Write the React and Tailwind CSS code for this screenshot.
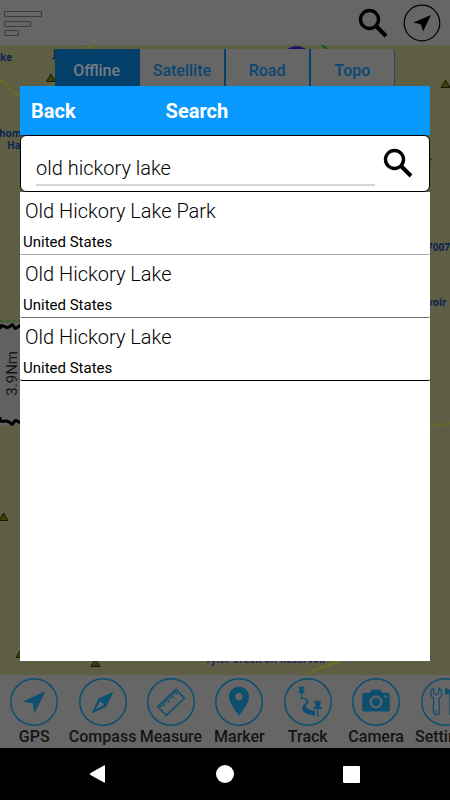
import React from "react";

const tabs = ["Offline", "Satellite", "Road", "Topo"];

const results = [
    { name: "Old Hickory Lake Park", country: "United States", line: "border-[#aaaaaa]" },
    { name: "Old Hickory Lake", country: "United States", line: "border-[#6e6e6e]" },
    { name: "Old Hickory Lake", country: "United States", line: "border-black" },
];

const SearchIcon = ({ className }) => (
    <svg viewBox="0 0 30 30" className={className} fill="none" stroke="currentColor" aria-hidden="true">
        <circle cx="11.5" cy="11.5" r="9" strokeWidth="3.4" />
        <path d="M18 18L28 28" strokeWidth="4" />
    </svg>
);

const icons = {
    GPS: <path d="M35.3 13.3L12.5 23.8L22.8 25.2L24.4 35.5Z" fill="currentColor" />,
    Compass: (
        <g>
            <path d="M34.5 13.8L19.5 20.5L12.7 35.4L27.5 28.5Z" fill="currentColor" />
            <path d="M21.2 23L25.2 26.8L16.2 31.8Z" fill="#666666" />
        </g>
    ),
    Measure: (
        <g fill="none" stroke="currentColor" strokeWidth="1.5">
            <path d="M29 11.3L37.4 20.3L19.3 37.4L10.8 28.6Z" />
            <path d="M12.7 26.7l2.2 2.2M14.8 24.7l3.2 3.2M16.9 22.7l2.2 2.2M19 20.7l3.2 3.2M21.1 18.7l2.2 2.2M23.2 16.7l3.2 3.2M25.3 14.7l2.2 2.2M27.2 12.9l3.2 3.2" />
        </g>
    ),
    Marker: (
        <path
            d="M24 8.7C18.3 8.7 14 13 14 18.6C14 25 20 32 24 37.8C28 32 34 25 34 18.6C34 13 29.7 8.7 24 8.7ZM24 15.1A3.6 3.6 0 1 1 24 22.3A3.6 3.6 0 1 1 24 15.1Z"
            fill="currentColor"
            fillRule="evenodd"
        />
    ),
    Track: (
        <g fill="currentColor">
            <path d="M14.6 8.7h5.8v1.4l-.8.8v2l1.6 2.3h-7.4l1.6-2.3v-2l-.8-.8zM17.1 15.2h1v5.8h-1z" />
            <path d="M30.4 22.8h6.4v1.6l-.9.8v2.4l2.4 3.4h-9.400l2.4-3.400v-2.400l-.9-.8zM33 30.9h1.3v8h-1.300z" />
            <path d="M18 19.800C20.500 19.800 24.600 21 24.200 23.800C23.700 26.300 21.500 27 22.200 29C23 31.500 27 32.200 31.200 32.800V37.400C24 37 18.200 34.600 18.200 30.200C18.200 27 22.600 25.800 22.400 23.600C22.200 22 20 21.400 18 21Z" />
        </g>
    ),
    Camera: (
        <g>
            <path
                d="M12.5 14.8h5.6l1.8-3.2h8.2l1.8 3.2h5.6a2.2 2.2 0 0 1 2.2 2.2v14.4a2.2 2.2 0 0 1-2.2 2.2h-23a2.2 2.2 0 0 1-2.2-2.2v-14.4a2.2 2.2 0 0 1 2.2-2.2z"
                fill="currentColor"
            />
            <circle cx="24" cy="24" r="5.4" fill="none" stroke="#666666" strokeWidth="2" />
            <path d="M32.5 17.5h2.5v2h-2.5z" fill="#666666" />
        </g>
    ),
    Settings: (
        <g>
            <path
                d="M12.8 10v5.2l2.4 1.8l2.4-1.8V10c4 2 4.2 8 .4 10.2L18.6 34.6c0 3-6.2 3-6.2 0L12.6 20.2C8.8 18 9 12 12.8 10Z"
                fill="none"
                stroke="currentColor"
                strokeWidth="1.2"
            />
            <circle cx="15.4" cy="34" r="1" fill="currentColor" />
            <path d="M24 10.5h2l1.5 1h8.5c2 0 3 2 3 4h-4v2h-7v-2l-2 1h-2z" fill="currentColor" />
            <path d="M29 17.5h4.5v19h-4.5z" fill="none" stroke="currentColor" strokeWidth="1.2" />
        </g>
    ),
};

const TopBar = () => (
    <header className="flex h-[45px] shrink-0 items-center bg-[#666666] pr-[9px] pl-1">
        <button aria-label="Menu" className="h-7 w-10">
            <svg viewBox="0 0 40 28" className="h-7 w-10" fill="none" stroke="#3b3e3b" strokeWidth="1.2">
                <rect x="0.5" y="2.5" width="37" height="5" rx="1" />
                <rect x="0.5" y="12.5" width="26" height="5" rx="1" />
                <rect x="0.5" y="21.5" width="14" height="5" rx="1" />
            </svg>
        </button>
        <button aria-label="Search" className="ml-auto mr-[15px]">
            <SearchIcon className="size-[30px]" />
        </button>
        <button aria-label="My location">
            <svg viewBox="0 0 38 38" className="size-[38px]">
                <circle cx="19" cy="19" r="17.8" fill="none" stroke="#000" strokeWidth="1.2" />
                <path d="M28 11L10.5 18.5L18 20.4L20 27.5Z" />
            </svg>
        </button>
    </header>
);

const ChartMap = () => (
    <main className="relative flex-1 overflow-hidden bg-[#5e5e45]">
        <svg className="absolute inset-0 h-full w-full" aria-hidden="true">
            <g fill="none" stroke="#62662f" strokeWidth="3">
                <path d="M0 36C8 38 10 46 17 50L24 50" />
                <path d="M50 42C64 30 76 8 94 0" />
                <path d="M305 631C315 622 335 620 350 611" />
                <path d="M428 382L450 378" />
            </g>
            <g fill="none" stroke="#707428" strokeWidth="1">
                <path d="M0 36C8 38 10 46 17 50L24 50" />
                <path d="M50 42C64 30 76 8 94 0" />
                <path d="M305 631C315 622 335 620 350 611" />
            </g>
            {/* Water and boat ramp */}
            <path d="M287 5C291 0 302 0 307 5Z" fill="#11116b" />
            <path d="M322 0L327 4" stroke="#075c1c" strokeWidth="2" />
            {/* Scale bar */}
            <path d="M0 278H20V380H0Z" fill="#626262" />
            <path d="M0 276H20" stroke="#155c2b" strokeDasharray="4 2" />
            <path d="M0 284V281C5 280 6 284 9 282S12 278 14 282S18 280 22 280" fill="none" stroke="#000" strokeWidth="3" />
            <path d="M0 372V376C5 377 6 375 9 377S12 381 14 377S18 378 22 378" fill="none" stroke="#000" strokeWidth="3" />
            {/* Beacons */}
            <g fill="#3f4008" stroke="#171800">
                <path d="M46.5 36.5L51 29L55.5 36.5Z" />
                <path d="M441 42.5L445.5 35L450 42.5Z" />
                <path d="M-1 475.5L3.5 468L8 475.5Z" />
                <path d="M16 612.5L20.5 605L25 612.5Z" />
                <path d="M91 621.5L95.5 614L100 621.5Z" />
                <path d="M423 115L427 108L431 115Z" />
            </g>
        </svg>
        <div className="font-['Open_Sans',sans-serif] text-[10px] leading-3 font-bold whitespace-nowrap text-[#0a2450]">
            <span className="absolute top-[6px] left-0">ke</span>
            <span className="absolute top-[2px] left-[53px]">J</span>
            <span className="absolute top-[82px] left-[-1px]">home</span>
            <span className="absolute top-[94px] left-[7px]">Ha</span>
            <span className="absolute top-[196px] left-[427px]">7007 I</span>
            <span className="absolute top-[251px] left-[427px]">voir</span>
            <span className="absolute top-[608px] left-[205px] text-[#1c2766]">Tyler Creek on Reservoir</span>
        </div>
        <span className="absolute top-[306px] left-[4px] font-['Roboto',sans-serif] text-[15px] leading-4 text-[#151515] [writing-mode:vertical-rl] rotate-180">
            3.9Nm
        </span>
        <nav className="relative mx-[55px] mt-1 flex h-12 divide-x-2 divide-[#063f69] overflow-hidden rounded-t-sm border-r border-[#24486a]">
            {tabs.map((tab) => (
                <button
                    key={tab}
                    className={
                        tab === "Offline"
                            ? "h-11 flex-1 bg-[#033f68] text-base font-medium text-[#737b82]"
                            : "h-11 flex-1 bg-[#666666] text-base font-medium text-[#0b4673]"
                    }
                >
                    {tab}
                </button>
            ))}
        </nav>
    </main>
);

const ToolBar = () => (
    <nav className="flex h-[73px] shrink-0 overflow-hidden bg-[#666666] pt-[3px]">
        {Object.keys(icons).map((label) => (
            <button key={label} className="flex w-[15.2%] shrink-0 flex-col items-center text-[#0c4f6f]">
                <svg viewBox="0 0 48 48" className="size-12" aria-hidden="true">
                    <circle cx="24" cy="24" r="23.2" fill="none" stroke="currentColor" strokeWidth="1.5" />
                    {icons[label]}
                </svg>
                <span className="mt-px text-base leading-5 font-medium text-[#151515]">{label}</span>
            </button>
        ))}
    </nav>
);

const SystemBar = () => (
    <footer className="flex h-[52px] shrink-0 items-center justify-center gap-[109px] bg-black pr-0.5 text-white">
        <button aria-label="Back">
            <svg viewBox="0 0 18 18" className="size-[18px]" fill="currentColor">
                <path d="M15 .5Q16 0 16 1V17Q16 18 15 17.5L1.500 10Q0 9 1.500 8Z" />
            </svg>
        </button>
        <button aria-label="Home" className="size-[18px] rounded-full bg-white" />
        <button aria-label="Recent apps" className="size-[17px] rounded-[1px] bg-white" />
    </footer>
);

const SearchDialog = () => (
    <div className="absolute inset-0 px-5 pt-[86px] pb-[139px]">
        <section role="dialog" aria-label="Search" className="flex h-full flex-col text-black">
            <div className="flex h-[49px] shrink-0 items-center bg-[#0899ff] pl-[11px] text-xl font-bold text-white">
                <button>Back</button>
                <h2 className="ml-[90px]">Search</h2>
            </div>
            <form className="flex h-[57px] shrink-0 rounded-md border border-black bg-white px-[15px]">
                <input
                    type="text"
                    aria-label="Place name"
                    defaultValue="old hickory lake"
                    className="mt-[14px] h-9 min-w-0 flex-1 border-b-2 border-[#d6d6d6] pt-[2px] text-xl font-light outline-none"
                />
                <button type="button" aria-label="Search" className="mt-3 mr-px ml-2 self-start">
                    <SearchIcon className="size-[30px]" />
                </button>
            </form>
            <ul className="flex-1 bg-white">
                {results.map((place, i) => (
                    <li key={i} className={`h-[63px] rounded-b-xs border-b pt-[5px] ${place.line}`}>
                        <p className="pl-[5px] text-xl leading-7 font-light">{place.name}</p>
                        <p className="mt-[7px] pl-[3px] text-[15px] leading-5">{place.country}</p>
                    </li>
                ))}
            </ul>
        </section>
    </div>
);

const App = () => {
    return (
        <div className="relative flex min-h-screen flex-col overflow-hidden bg-black font-['Roboto',sans-serif]">
            <TopBar />
            <ChartMap />
            <ToolBar />
            <SystemBar />
            <SearchDialog />
        </div>
    );
};

export default App;
